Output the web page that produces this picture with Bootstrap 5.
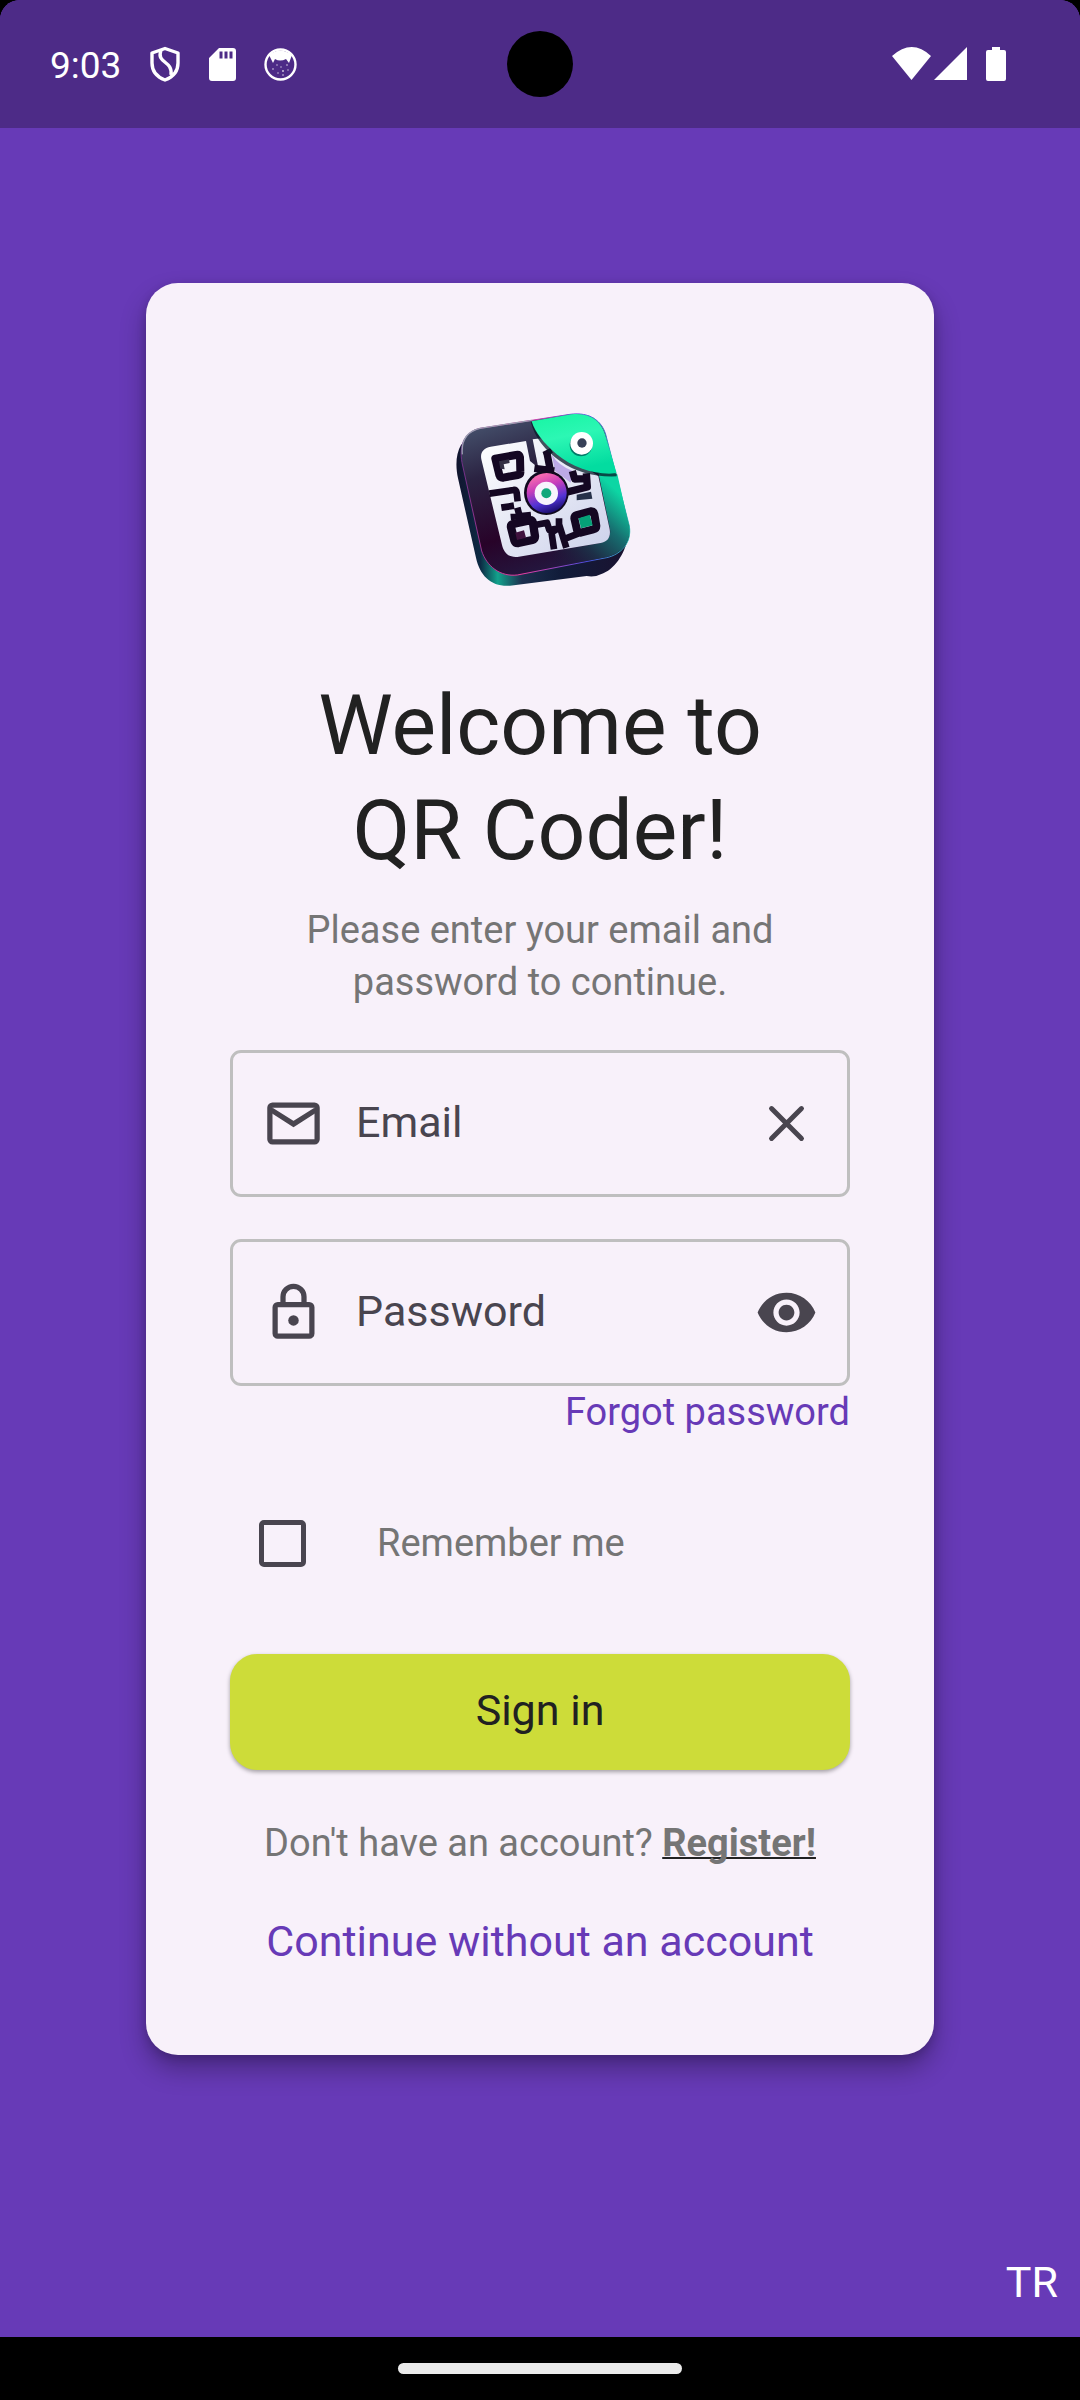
<!DOCTYPE html>
<html lang="en">
<head>
<meta charset="utf-8">
<meta name="viewport" content="width=device-width, initial-scale=1">
<title>QR Coder</title>
<link href="https://cdn.jsdelivr.net/npm/bootstrap@5.3.0/dist/css/bootstrap.min.css" rel="stylesheet">
<style>
  :root { --brand: #673ab7; --ink: #212121; --muted: #757575; --glyph: #49454f; }
  body { background: #000; font-family: Roboto, "Liberation Sans", sans-serif; font-size: 38px; line-height: 52px; color: var(--muted); }
  a, a:hover { color: var(--brand); }
  .screen { background: var(--brand); border-radius: 20px 20px 0 0; overflow: hidden; }
  .status { background: #4d2b87; height: 128px; padding: 0 74px 0 50px; }
  .status-left { gap: 28px; }
  .clock { font-size: 37px; padding-top: 3px; }
  .camera { width: 66px; height: 66px; top: 31px; background: #000; }
  .label-lg { font-size: 43px; line-height: 60px; }
  .login-card { max-width: 788px; padding: 84px; border: 0; border-radius: 32px; background: #f8f1fa; box-shadow: 0 14px 26px rgba(0,0,0,.3), 0 3px 10px rgba(0,0,0,.15); }
  .app-logo { width: 264px; height: 264px; margin-bottom: 42px; }
  .welcome { font-size: 84px; line-height: 105px; color: var(--ink); margin-bottom: 21px; }
  .intro { margin-bottom: 42px; }
  .field { height: 147px; border: 3px solid #bfbfbf; border-radius: 11px; color: var(--glyph); padding: 0 29px; }
  .field + .field { margin-top: 42px; }
  .field svg { width: 63px; height: 63px; flex: none; display: block; }
  .field .form-control { padding: 0 0 3px 31px; height: 100%; color: var(--glyph); font-size: 43px; box-shadow: none; }
  .field .form-control::placeholder { color: var(--glyph); opacity: 1; }
  .remember { height: 147px; margin: 32px 0 37px; padding-left: 29px; gap: 71px; }
  .remember .form-check-input { width: 47px; height: 47px; margin: 0; border: 5px solid var(--glyph); border-radius: 5px; background-color: transparent; }
  .btn-sign, .btn-sign:hover { background: #cddc39; color: var(--ink); border: 0; border-radius: 27px; height: 116px; padding: 0 0 4px; box-shadow: 0 2px 4px rgba(0,0,0,.35); margin-bottom: 47px; }
  .register { margin-bottom: 42px; }
  .register a { color: var(--muted); text-decoration-color: var(--ink); text-decoration-thickness: 2px; text-decoration-skip-ink: none; }
  .lang { padding: 43px 22px 25px; }
  .navpill { width: 284px; height: 11px; border-radius: 6px; background: #ebebeb; }
  .gesture { height: 63px; }
</style>
<script src="https://cdn.jsdelivr.net/npm/bootstrap@5.3.0/dist/js/bootstrap.bundle.min.js"></script>
</head>
<body class="d-flex flex-column min-vh-100">
<div class="screen d-flex flex-column flex-grow-1">
  <header class="status d-flex align-items-center justify-content-between position-relative text-white">
    <div class="status-left d-flex align-items-center">
      <span class="clock">9:03</span>
      <svg width="32" height="36" viewBox="0 0 32 36" fill="none" stroke="#fff" stroke-width="3.400" stroke-linejoin="round"><path d="M16 2.500 29 7V17C29 25 24 31 16 34 8 31 3 25 3 17V7Z"/><path d="M12 4C7 18 24 14 22 29"/></svg>
      <svg width="27" height="33" viewBox="0 0 27 33"><path fill="#fff" fill-rule="evenodd" d="M10 0H24Q27 0 27 3V30Q27 33 24 33H3Q0 33 0 30V10ZM10.500 3.500V10.500H13.500V3.500ZM15.500 3.500V10.500H18.500V3.500ZM20.500 3.500V10.500H23.500V3.500Z"/></svg>
      <svg width="33" height="33" viewBox="0 0 33 33"><circle cx="16.500" cy="16.500" r="15" fill="none" stroke="#fff" stroke-width="2.400"/><path fill="#fff" d="M5 7Q16-2 28 7L25 15 22 11Q16 14 11 11L9 15Z"/><g fill="#fff" opacity=".8"><circle cx="9" cy="21" r=".8"/><circle cx="13" cy="17" r=".7"/><circle cx="17" cy="19" r=".7"/><circle cx="23" cy="17" r=".8"/><circle cx="19" cy="23" r=".9"/><circle cx="24" cy="22" r=".7"/><circle cx="14" cy="25" r=".7"/><circle cx="19" cy="27" r=".8"/></g></svg>
    </div>
    <div class="camera position-absolute start-50 translate-middle-x rounded-circle"></div>
    <svg width="114" height="34" viewBox="0 0 114 34" fill="#fff"><path d="M0 9Q20-9 39 9L19.500 33ZM42 33 75 0V33ZM96 3H100V0H108V3H112Q114 3 114 5V32Q114 34 112 34H96Q94 34 94 32V5Q94 3 96 3Z"/></svg>
  </header>

  <main class="flex-grow-1 d-flex align-items-center justify-content-center">
    <form class="card login-card w-100">
      <svg class="app-logo mx-auto" viewBox="-66 -72 792 792" role="img" aria-label="QR Coder logo">
        <defs>
          <linearGradient id="side" x1="0" y1="0" x2="1" y2="0"><stop offset="0" stop-color="#12142e"/><stop offset=".14" stop-color="#0c2a44"/><stop offset=".24" stop-color="#12a28c"/><stop offset=".38" stop-color="#1c2f4e"/><stop offset=".6" stop-color="#111c3a"/><stop offset="1" stop-color="#1a1230"/></linearGradient>
          <linearGradient id="face" x1=".2" y1="0" x2=".55" y2="1"><stop offset="0" stop-color="#47546f"/><stop offset=".32" stop-color="#2b2342"/><stop offset=".7" stop-color="#280329"/><stop offset="1" stop-color="#231a42"/></linearGradient>
          <linearGradient id="edge" x1=".35" y1="1" x2="1" y2=".3"><stop offset="0" stop-color="#1c1836" stop-opacity="0"/><stop offset=".35" stop-color="#1d3048"/><stop offset=".65" stop-color="#176b6e"/><stop offset="1" stop-color="#0dd6a4"/></linearGradient>
          <linearGradient id="rim" x1="0" y1="0" x2="1" y2="0"><stop offset="0" stop-color="#6f3087"/><stop offset=".35" stop-color="#f03ca0"/><stop offset=".75" stop-color="#4b4ee0"/><stop offset="1" stop-color="#2bbfae"/></linearGradient>
          <linearGradient id="flap" x1="0" y1="0" x2=".3" y2="1"><stop offset="0" stop-color="#16f5a2"/><stop offset=".45" stop-color="#2cf7b4"/><stop offset="1" stop-color="#03dca0"/></linearGradient>
          <linearGradient id="panel" x1="0" y1="0" x2="1" y2="1"><stop offset="0" stop-color="#fff"/><stop offset="1" stop-color="#cbd0ea"/></linearGradient>
          <linearGradient id="orb" x1=".3" y1="0" x2=".65" y2="1"><stop offset="0" stop-color="#ff72ad"/><stop offset=".35" stop-color="#c83ebb"/><stop offset=".7" stop-color="#5133d4"/><stop offset="1" stop-color="#160b65"/></linearGradient>
        </defs>
        <path fill="url(#side)" d="M94 160C76 190 77 230 84 262L138 500C150 555 185 588 240 584L470 555Q495 560 520 547C560 530 588 480 596 430L500 350Z"/>
        <path fill="url(#face)" stroke="url(#rim)" stroke-width="3" d="M150 112 420 70C480 62 515 90 527 130L598 405C606 455 574 490 530 500L262 552C210 558 170 525 155 480L96 215C86 160 105 122 150 112Z"/>
        <path fill="url(#edge)" d="M505 245 562 250 597 405C605 455 574 488 530 498L300 542 380 480 512 456Q545 446 540 415Z"/>
        <path d="M97 190Q91 126 150 112L305 88" fill="none" stroke="#9b9db1" stroke-width="4"/>
        <path fill="url(#panel)" d="M182 167 288 150 300 210 325 230 308 145 335 142 505 255 539 415C543 440 532 452 512 456L262 498C235 500 222 485 216 462L154 205C150 185 160 171 182 167Z"/>
        <path fill="#bda9e6" d="M365 190Q385 224 428 240L422 275 375 240Z"/>
        <g fill="none" stroke="#140722" stroke-linejoin="round">
          <path stroke-width="24" d="M196 203 258 192Q268 190 270 199L271 242Q272 250 263 252L220 260Q211 261 208 252Z"/>
          <path stroke-width="20" d="M178 308 250 297Q259 295 260 305L263 331M214 350 252 344M262 350 270 380M242 378 303 372"/>
          <path stroke-width="25" d="M249 399 298 388Q307 387 309 396L315 436Q315 445 307 447L265 456Q256 457 253 448L243 409Q242 401 249 399Z"/>
          <path stroke-width="20" d="M315 402 351 395 358 417 387 412V382M362 407 372 475M387 400 409 470M382 414 365 424M408 442 444 428"/>
          <path stroke-width="24" d="M440 372 482 361Q491 360 493 369L499 405Q499 413 490 415L452 425Q443 426 441 417L433 382Q433 374 440 372Z"/>
          <path stroke-width="22" d="M313 232 373 240M350 182 361 238M407 304 472 288 469 247M427 240 434 264 470 263"/>
          <path stroke-width="16" d="M341 190 365 178"/>
        </g>
        <path fill="#343044" d="M207 211 237 205 239 216 221 220 224 235 211 233Z"/>
        <path fill="#3f123e" d="M256 425 282 418 288 440 261 447Z"/>
        <path fill="#05a177" d="M446 382 479 371 488 403 453 412Z"/>
        <path fill="#263049" d="M440 311 483 302 487 323 440 328Z"/>
        <circle cx="349" cy="305" r="67" fill="#10091f"/>
        <circle cx="350" cy="306" r="60" fill="url(#orb)"/>
        <circle cx="349" cy="307" r="35" fill="#f8f4fd"/><circle cx="349" cy="307" r="15" fill="#13a77c"/>
        <path fill="#071b28" opacity=".75" d="M303 95Q320 160 390 210 460 260 560 256V248L305 92Z"/>
        <path fill="url(#flap)" d="M305 91 425 70C480 64 512 90 525 130L560 247C500 254 430 232 380 190 340 155 315 125 305 91Z"/>
        <circle cx="453" cy="162" r="34" fill="#007b68"/>
        <circle cx="455" cy="157" r="34" fill="#fff"/><circle cx="456" cy="156" r="14" fill="#374057"/>
      </svg>
      <h1 class="welcome text-center fw-normal">Welcome to<br>QR Coder!</h1>
      <p class="intro text-center">Please enter your email and<br>password to continue.</p>

      <div class="field d-flex align-items-center">
        <svg viewBox="0 0 24 24" fill="none" stroke="currentColor" stroke-width="2" aria-hidden="true"><rect x="3" y="5" width="18" height="14" rx="1"/><path d="M3.500 6.800 12 12.200 20.500 6.800"/></svg>
        <input class="form-control border-0 bg-transparent" id="email" type="email" placeholder="Email" aria-label="Email">
        <button class="btn p-0 border-0" type="button" aria-label="Clear email"><svg viewBox="0 0 24 24" fill="none" stroke="#49454f" stroke-width="1.900" stroke-linecap="round"><path d="M6.300 6.300 17.700 17.700M17.700 6.300 6.300 17.700"/></svg></button>
      </div>
      <div class="field d-flex align-items-center">
        <svg viewBox="0 0 24 24" fill="none" stroke="currentColor" stroke-width="2" aria-hidden="true"><rect x="5" y="9" width="14" height="12" rx="1"/><path d="M8 9V6A4 4 0 0 1 16 6V9"/><circle cx="12" cy="15" r="2" fill="currentColor" stroke="none"/></svg>
        <input class="form-control border-0 bg-transparent" id="password" type="password" placeholder="Password" aria-label="Password">
        <button class="btn p-0 border-0" type="button" aria-label="Show password"><svg viewBox="0 0 24 24" fill="#49454f"><path d="M12 4.500C7 4.500 2.730 7.610 1 12c1.730 4.390 6 7.500 11 7.500s9.270-3.110 11-7.500c-1.730-4.390-6-7.500-11-7.500zM12 17c-2.760 0-5-2.240-5-5s2.240-5 5-5 5 2.240 5 5-2.240 5-5 5zm0-8c-1.660 0-3 1.340-3 3s1.340 3 3 3 3-1.340 3-3-1.340-3-3-3z"/></svg></button>
      </div>
      <a class="align-self-end text-decoration-none" href="#forgot">Forgot password</a>

      <div class="remember d-flex align-items-center">
        <input class="form-check-input" type="checkbox" id="remember">
        <label for="remember">Remember me</label>
      </div>

      <button class="btn btn-sign label-lg w-100" type="submit">Sign in</button>
      <p class="register text-center">Don't have an account? <a class="fw-bold" href="#register">Register!</a></p>
      <a class="label-lg text-center text-decoration-none" href="#guest">Continue without an account</a>
    </form>
  </main>

  <footer class="lang d-flex justify-content-end">
    <a class="label-lg text-white text-decoration-none" href="#tr">TR</a>
  </footer>
</div>
<div class="gesture d-flex align-items-center justify-content-center"><div class="navpill"></div></div>
</body>
</html>
